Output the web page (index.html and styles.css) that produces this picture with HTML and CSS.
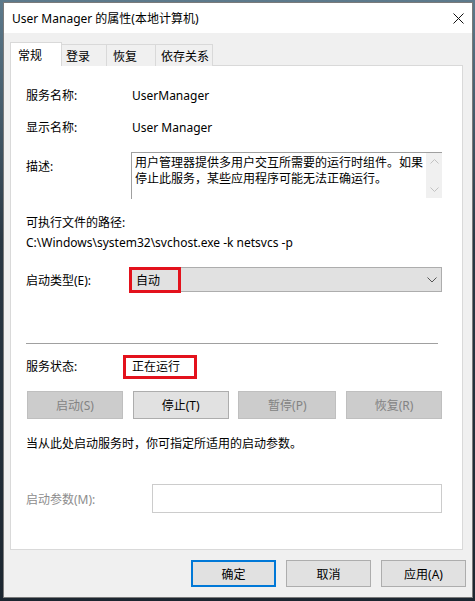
FILE: index.html
```html
<!DOCTYPE html>
<html lang="zh-CN">
<head>
    <meta charset="UTF-8">
    <title>User Manager 的属性(本地计算机)</title>
    <link rel="stylesheet" href="styles.css">
</head>
<body>

    <div class="window">
        <!-- Title bar -->
        <div class="titlebar">
            <span class="title">User Manager 的属性(本地计算机)</span>
            <span class="close">
                <svg width="11" height="11" viewBox="0 0 11 11"><path d="M0.5 0.5 L10.5 10.5 M10.5 0.5 L0.5 10.5" stroke="#111" stroke-width="1" fill="none"/></svg>
            </span>
        </div>

        <div class="body">
            <!-- Tabs -->
            <div class="tabs">
                <div class="tab active">常规</div>
                <div class="tab tab-login">登录</div>
                <div class="tab tab-recover">恢复</div>
                <div class="tab tab-deps">依存关系</div>
            </div>

            <div class="panel">
                <div class="field first">
                    <span class="label">服务名称:</span>
                    <span class="value">UserManager</span>
                </div>
                <div class="field">
                    <span class="label">显示名称:</span>
                    <span class="value">User Manager</span>
                </div>
                <div class="desc-row">
                    <span class="label">描述:</span>
                    <div class="desc-box">
                        <div class="desc-text">用户管理器提供多用户交互所需要的运行时组件。如果<br>停止此服务，某些应用程序可能无法正确运行。</div>
                        <div class="scrollbar">
                            <svg width="9" height="5" viewBox="0 0 9 5"><path d="M0.5 4.5 L4.5 0.5 L8.5 4.5" stroke="#c2c2c2" fill="none"/></svg>
                            <svg width="9" height="5" viewBox="0 0 9 5"><path d="M0.5 0.5 L4.5 4.5 L8.5 0.5" stroke="#c2c2c2" fill="none"/></svg>
                        </div>
                    </div>
                </div>
                <div class="line path-label">可执行文件的路径:</div>
                <div class="line">C:\Windows\system32\svchost.exe -k netsvcs -p</div>
                <div class="combo-row">
                    <span class="label">启动类型(E):</span>
                    <div class="combo">
                        <span>自动</span>
                        <svg width="10" height="6" viewBox="0 0 10 6"><path d="M0.5 0.5 L5 5 L9.5 0.5" stroke="#555" fill="none"/></svg>
                        <div class="mark mark-combo"></div>
                    </div>
                </div>
                <div class="separator"></div>
                <div class="field status-row">
                    <span class="label">服务状态:</span>
                    <span class="value status">正在运行<span class="mark mark-status"></span></span>
                </div>
                <div class="buttons">
                    <button class="btn" disabled>启动(S)</button>
                    <button class="btn">停止(T)</button>
                    <button class="btn wide" disabled>暂停(P)</button>
                    <button class="btn" disabled>恢复(R)</button>
                </div>
                <div class="line hint">当从此处启动服务时，你可指定所适用的启动参数。</div>
                <div class="param-row">
                    <span class="label muted">启动参数(M):</span>
                    <div class="param-input"></div>
                </div>
            </div>

            <!-- Dialog buttons -->
            <div class="actions">
                <button class="btn dialog default">确定</button>
                <button class="btn dialog">取消</button>
                <button class="btn dialog">应用(A)</button>
            </div>
        </div>
    </div>

</body>
</html>
```

FILE: styles.css
```css
* {
    box-sizing: border-box;
    margin: 0;
    padding: 0;
}
body {
    width: 475px;
    height: 601px;
    overflow: hidden;
    background: linear-gradient(#5d7a8c, #2a3844 40%, #1c2630);
    font-family: "Noto Sans", "Noto Sans CJK SC", sans-serif;
    font-size: 12px;
    color: #000;
}
.window {
    margin: 2px 0 0 3px;
    width: 470px;
    height: 596px;
    border: 1px solid #7a7a7a;
    background-color: #f0f0f0;
}
.titlebar {
    height: 30px;
    background-color: #fff;
    display: flex;
    align-items: center;
    justify-content: space-between;
    padding: 0 8px 0 8px;
}
.title {
    font-size: 12px;
    color: #000;
}
.close {
    display: flex;
    margin-top: 1px;
}
.body {
    padding: 9px 6px 0 6px;
}
/* Tabs */
.tabs {
    display: flex;
    align-items: flex-end;
    height: 24px;
    margin-bottom: -1px;
}
.tab {
    height: 22px;
    border: 1px solid #d9d9d9;
    border-bottom: none;
    border-left: none;
    background-color: #f0f0f0;
    display: flex;
    align-items: center;
    padding-left: 4px;
    padding-top: 1px;
}
.tab.active {
    height: 24px;
    width: 52px;
    border-left: 1px solid #d9d9d9;
    background-color: #fff;
    padding-left: 7px;
    padding-top: 0;
    position: relative;
    z-index: 1;
}
.tab-login {
    width: 45px;
}
.tab-recover {
    width: 49px;
    padding-left: 6px;
}
.tab-deps {
    width: 57px;
    padding-left: 5px;
}
/* Panel */
.panel {
    width: 453px;
    height: 485px;
    border: 1px solid #d9d9d9;
    background-color: #fff;
    padding: 19px 20px 0 15px;
}
.field {
    display: flex;
    align-items: center;
    height: 20px;
    margin-top: 12px;
}
.field.first {
    margin-top: 0;
}
.label {
    width: 106px;
    flex-shrink: 0;
}
.muted {
    color: #8d8d8d;
}
.desc-row {
    display: flex;
    margin-top: 15px;
}
.desc-row .label {
    width: 105px;
    line-height: 20px;
    margin-top: 5px;
}
.desc-box {
    flex: 1;
    height: 47px;
    display: flex;
    border-top: 1px solid #a0a0a0;
    border-left: 1px solid #a0a0a0;
}
.desc-text {
    flex: 1;
    padding: 2px 0 0 3px;
    line-height: 16px;
    white-space: nowrap;
    overflow: hidden;
}
.scrollbar {
    width: 16px;
    height: 45px;
    background-color: #f0f0f0;
    display: flex;
    flex-direction: column;
    justify-content: space-between;
    align-items: center;
    padding: 6px 0 6px 0;
}
.line {
    height: 20px;
    line-height: 20px;
}
.path-label {
    margin-top: 14px;
}
.combo-row {
    display: flex;
    align-items: center;
    margin-top: 14px;
}
.combo-row .label {
    width: 104px;
}
.combo {
    flex: 1;
    height: 25px;
    background-color: #e1e1e1;
    border: 1px solid #adadad;
    display: flex;
    align-items: center;
    justify-content: space-between;
    padding: 0 4px 0 5px;
    position: relative;
}
/* red annotation frames */
.mark {
    position: absolute;
    border: 3px solid #e3121c;
}
.mark-combo {
    left: -2px;
    top: -1px;
    width: 52px;
    height: 26px;
}
.status {
    position: relative;
}
.mark-status {
    left: -9px;
    top: -2px;
    width: 74px;
    height: 24px;
}
.separator {
    height: 1px;
    width: 412px;
    background-color: #a0a0a0;
    margin-top: 51px;
}
.status-row {
    margin-top: 12px;
}
.buttons {
    display: flex;
    justify-content: space-between;
    margin-top: 15px;
    padding-left: 1px;
}
.btn {
    width: 96px;
    height: 28px;
    font-family: "Noto Sans", "Noto Sans CJK SC", sans-serif;
    font-size: 12px;
    color: #000;
    background-color: #e1e1e1;
    border: 1px solid #adadad;
}
.btn.wide {
    width: 98px;
}
.btn:disabled {
    background-color: #cccccc;
    border-color: #bfbfbf;
    color: #838383;
}
.hint {
    margin-top: 15px;
}
.param-row {
    display: flex;
    align-items: center;
    margin-top: 30px;
}
.param-row .label {
    width: 126px;
}
.param-input {
    flex: 1;
    height: 29px;
    border: 1px solid #cccccc;
}
/* Bottom dialog buttons */
.actions {
    display: flex;
    justify-content: flex-end;
    gap: 10px;
    margin-top: 10px;
    padding-right: 0;
}
.btn.dialog {
    width: 85px;
    height: 27px;
}
.btn.default {
    border: 2px solid #0078d7;
}
```
